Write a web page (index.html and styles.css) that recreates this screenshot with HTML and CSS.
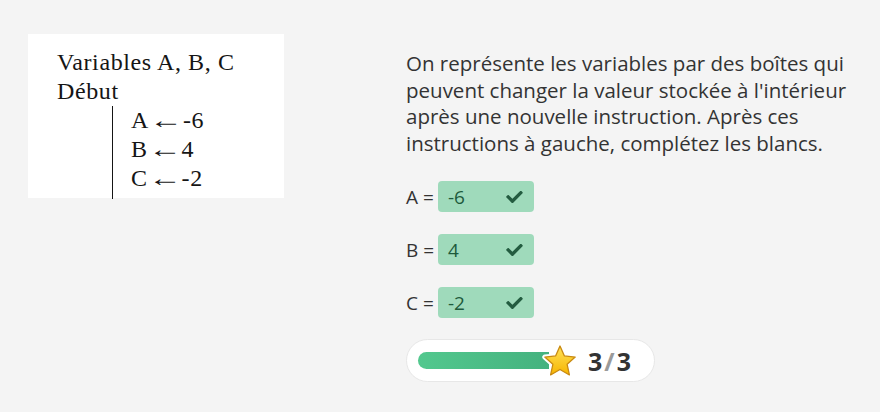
FILE: index.html
```html
<!DOCTYPE html>
<html lang="fr">
<head>
<meta charset="utf-8">
<title>Variables</title>
<link rel="stylesheet" href="styles.css">
</head>
<body>
<div class="page">
  <div class="figure">
    <div class="fig-line">Variables A, B, C</div>
    <div class="fig-line">Début</div>
    <div class="fig-block">
      <div class="fig-line">A<span class="arrow">←</span>-6</div>
      <div class="fig-line">B<span class="arrow">←</span>4</div>
      <div class="fig-line">C<span class="arrow">←</span>-2</div>
    </div>
  </div>
  <div class="content">
    <p class="question">On représente les variables par des boîtes qui peuvent changer la valeur stockée à l'intérieur après une nouvelle instruction. Après ces instructions à gauche, complétez les blancs.</p>
    <div class="rows">
      <div class="row">
        <span class="label">A =</span>
        <div class="answer"><span>-6</span><svg class="check" viewBox="0 0 512 370"><path d="M173.9 367.4l-166.4-166.4c-10-10-10-26.2 0-36.2l36.2-36.2c10-10 26.2-10 36.2 0L192 240.7 432.1 0.6c10-10 26.2-10 36.2 0l36.2 36.2c10 10 10 26.2 0 36.2l-294.4 294.4c-10 10-26.2 10-36.2 0z"/></svg></div>
      </div>
      <div class="row">
        <span class="label">B =</span>
        <div class="answer"><span>4</span><svg class="check" viewBox="0 0 512 370"><path d="M173.9 367.4l-166.4-166.4c-10-10-10-26.2 0-36.2l36.2-36.2c10-10 26.2-10 36.2 0L192 240.7 432.1 0.6c10-10 26.2-10 36.2 0l36.2 36.2c10 10 10 26.2 0 36.2l-294.4 294.4c-10 10-26.2 10-36.2 0z"/></svg></div>
      </div>
      <div class="row">
        <span class="label">C =</span>
        <div class="answer"><span>-2</span><svg class="check" viewBox="0 0 512 370"><path d="M173.9 367.4l-166.4-166.4c-10-10-10-26.2 0-36.2l36.2-36.2c10-10 26.2-10 36.2 0L192 240.7 432.1 0.6c10-10 26.2-10 36.2 0l36.2 36.2c10 10 10 26.2 0 36.2l-294.4 294.4c-10 10-26.2 10-36.2 0z"/></svg></div>
      </div>
    </div>
    <div class="score">
      <div class="bar"></div>
      <svg class="star" viewBox="0 0 36 36">
        <defs>
          <linearGradient id="sg" x1="0" y1="0" x2="0" y2="1">
            <stop offset="0" stop-color="#ffe25a"/>
            <stop offset="1" stop-color="#f7b500"/>
          </linearGradient>
        </defs>
        <polygon points="18,3 22.41,12.93 33.22,14.06 25.13,21.32 27.4,31.94 18,26.5 8.6,31.94 10.87,21.32 2.78,14.06 13.59,12.93" fill="#fff" stroke="#fff" stroke-width="5" stroke-linejoin="round"/>
        <polygon points="18,3 22.41,12.93 33.22,14.06 25.13,21.32 27.4,31.94 18,26.5 8.6,31.94 10.87,21.32 2.78,14.06 13.59,12.93" fill="url(#sg)" stroke="#c98a12" stroke-width="1.3" stroke-linejoin="round"/>
      </svg>
      <span class="count">3<span class="slash">/</span>3</span>
    </div>
  </div>
</div>
</body>
</html>
```

FILE: styles.css
```css
html, body {
  margin: 0;
  padding: 0;
  background: #f4f4f4;
}

.page {
  display: flex;
  align-items: flex-start;
  padding: 34px 0 0 28px;
}

.figure {
  width: 256px;
  height: 164px;
  box-sizing: border-box;
  background: #ffffff;
  padding: 14px 0 0 29px;
  font-family: "Liberation Serif", "Times New Roman", serif;
  font-size: 24px;
  line-height: 29px;
  letter-spacing: 0.6px;
  color: #151515;
}

.fig-line {
  white-space: nowrap;
}

.fig-block {
  margin-left: 55px;
  border-left: 1.5px solid #151515;
  padding-left: 18px;
  padding-bottom: 6px;
}

.arrow {
  display: inline-block;
  width: 34px;
  text-align: center;
  letter-spacing: 0;
  transform: scaleX(1.4);
}

.content {
  margin-left: 122px;
  margin-top: 16px;
  font-family: "Open Sans", sans-serif;
  color: #333;
}

.question {
  margin: 0;
  width: 460px;
  font-size: 20.5px;
  line-height: 26.5px;
}

.rows {
  display: flex;
  flex-direction: column;
  gap: 22px;
  margin-top: 25px;
}

.row {
  display: flex;
  align-items: center;
}

.label {
  width: 32px;
  font-size: 19px;
  color: #333;
}

.answer {
  width: 96px;
  height: 31px;
  box-sizing: border-box;
  border-radius: 4px;
  background: #9fdabb;
  display: flex;
  align-items: center;
  justify-content: space-between;
  padding: 0 11px 0 10px;
  font-size: 19px;
  color: #1e5a3c;
}

.check {
  width: 17px;
  height: 12px;
  fill: #235c40;
}

.score {
  margin-top: 21px;
  width: 249px;
  height: 43px;
  box-sizing: border-box;
  border: 1px solid #e7e7e7;
  border-radius: 22px;
  background: #fff;
  display: flex;
  align-items: center;
  padding-left: 11px;
}

.bar {
  width: 131px;
  height: 17px;
  border-radius: 9px 0 0 9px;
  background: linear-gradient(90deg, #52c88e, #45b27f);
}

.star {
  width: 36px;
  height: 36px;
  margin-left: -7px;
}

.count {
  margin-left: 10px;
  font-size: 25px;
  font-weight: 700;
  color: #333;
  letter-spacing: 2px;
}

.slash {
  color: #9a9a9a;
  font-weight: 700;
}
```
